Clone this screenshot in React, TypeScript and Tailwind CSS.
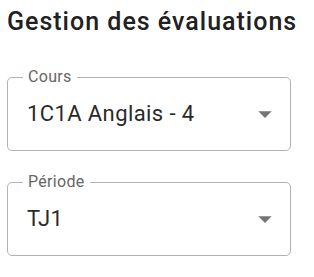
import React from 'react';

interface SelectFieldProps {
  label: string;
  value: string;
}

const SelectField: React.FC<SelectFieldProps> = ({ label, value }) => {
  return (
    <div className="relative w-[284px] h-[74px] rounded-[5px] border border-[#b3b3b3] flex items-center pl-[19px] pr-[9px]">
      {/* floating label sitting on the top border */}
      <span className="absolute left-[15px] top-[-9px] bg-white px-[5px] text-[16px] leading-[16px] tracking-[0.3px] text-[#666666]">
        {label}
      </span>
      <span className="flex-1 text-[22px] leading-[28px] tracking-[0.4px] text-[#2a2a2a]">{value}</span>
      <svg width="32" height="32" viewBox="0 0 24 24" className="shrink-0">
        <path d="M7 10l5 5 5-5z" fill="#757575" />
      </svg>
    </div>
  );
};

const App: React.FC = () => {
  return (
    <div className="w-[314px] h-[277px] bg-white pl-[7px] pt-[6px] font-['Roboto',sans-serif]">
      <h1 className="text-[25px] leading-[32px] font-medium tracking-[1px] text-[#212121]">
        Gestion des évaluations
      </h1>
      <div className="mt-[39px] flex flex-col gap-[31px]">
        <SelectField label="Cours" value="1C1A Anglais - 4" />
        <SelectField label="Période" value="TJ1" />
      </div>
    </div>
  );
};

export default App;
